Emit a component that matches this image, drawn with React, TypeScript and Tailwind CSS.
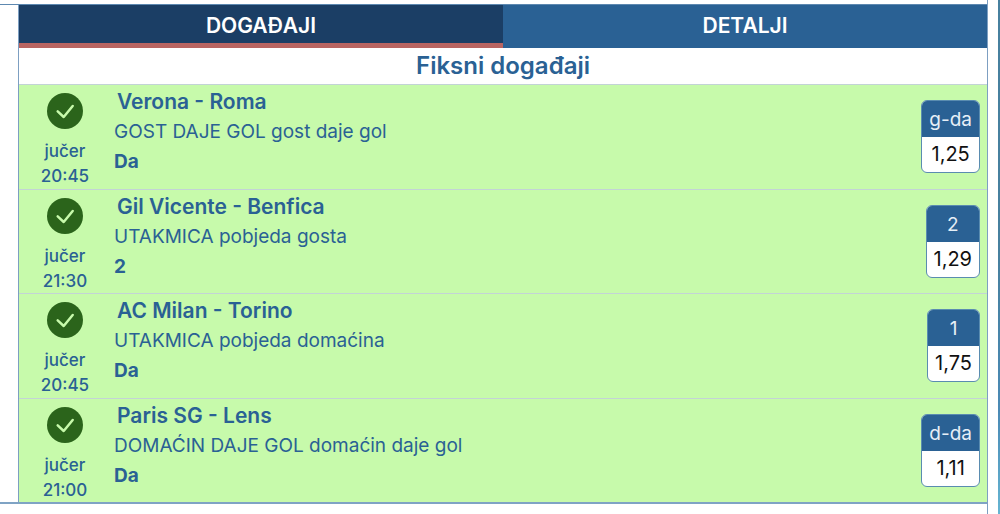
import { useState } from "react";

type BetEvent = {
  teams: string;
  market: string;
  pick: string;
  time: string;
  code: string;
  odds: string;
};

const events: BetEvent[] = [
  { teams: "Verona - Roma", market: "GOST DAJE GOL gost daje gol", pick: "Da", time: "20:45", code: "g-da", odds: "1,25" },
  { teams: "Gil Vicente - Benfica", market: "UTAKMICA pobjeda gosta", pick: "2", time: "21:30", code: "2", odds: "1,29" },
  { teams: "AC Milan - Torino", market: "UTAKMICA pobjeda domaćina", pick: "Da", time: "20:45", code: "1", odds: "1,75" },
  { teams: "Paris SG - Lens", market: "DOMAĆIN DAJE GOL domaćin daje gol", pick: "Da", time: "21:00", code: "d-da", odds: "1,11" },
];

const tabs = ["DOGAĐAJI", "DETALJI"];

function WonIcon() {
  return (
    <svg viewBox="0 0 36 36" className="size-9" aria-hidden="true">
      <circle cx="18" cy="18" r="18" fill="#2b641b" />
      <path
        d="M10.7 18.4l6 5.6 9-11"
        fill="none"
        stroke="#c7faab"
        strokeWidth="2.5"
        strokeLinecap="round"
        strokeLinejoin="round"
      />
    </svg>
  );
}

function EventRow({ event }: { event: BetEvent }) {
  return (
    <li className="flex border-t border-[#c3d3d6] bg-[#c7faab] odd:pb-px">
      <div className="flex w-[92px] shrink-0 flex-col items-center pt-2 text-[17px] font-medium">
        <WonIcon />
        <span className="mt-[9px] leading-[26px]">jučer</span>
        <time className="leading-6">{event.time}</time>
      </div>
      <div className="min-w-0 flex-1 pt-[2px] pl-[3px] text-[19px] leading-[30px]">
        <h3 className="pl-[3px] text-[21px] font-semibold">{event.teams}</h3>
        <p>{event.market}</p>
        <p className="font-bold">{event.pick}</p>
      </div>
      <div className="mr-[7px] self-center overflow-hidden rounded-md border border-[#5a8cb0] bg-white text-center">
        <div className="bg-[#2a6194] px-[7px] pt-px text-[19px] leading-[35px] text-[#e6eff7]">{event.code}</div>
        <div className="px-[7px] text-[20px] leading-[35px] text-[#111]">{event.odds}</div>
      </div>
    </li>
  );
}

export default function App() {
  const [active, setActive] = useState(0);

  return (
    <div className="flex min-h-screen bg-white font-['Inter',sans-serif] text-[#2a6194]">
      <main className="min-w-0 flex-1 border-r border-[#7d9fc2] pt-1">
        <div className="border-t border-b-2 border-t-[#5d88b0] border-b-[#7fa3c4] pl-[18px]">
          <div className="border-l border-[#7d9fc2]">
            <div role="tablist" className="flex bg-[#2a6194]">
              {tabs.map((tab, i) => (
                <button
                  key={tab}
                  type="button"
                  role="tab"
                  aria-selected={active === i}
                  onClick={() => setActive(i)}
                  className={`h-[43px] flex-1 cursor-pointer border-b-5 pt-1 text-[21px] leading-6 font-semibold text-white ${
                    active === i ? "border-[#b96562] bg-[#1b3e65]" : "border-[#2a6194] bg-[#2a6194]"
                  }`}
                >
                  {tab}
                </button>
              ))}
            </div>
            <h2 className="text-center text-[24px] leading-9 font-semibold">Fiksni događaji</h2>
            <ul>
              {events.map((event) => (
                <EventRow key={event.teams} event={event} />
              ))}
            </ul>
          </div>
        </div>
      </main>
      <div className="ml-[10px] w-[2px] bg-linear-to-b from-[#47809f] from-50% via-[#4b8ab5] via-80% to-[#66b5d2]" />
    </div>
  );
}
